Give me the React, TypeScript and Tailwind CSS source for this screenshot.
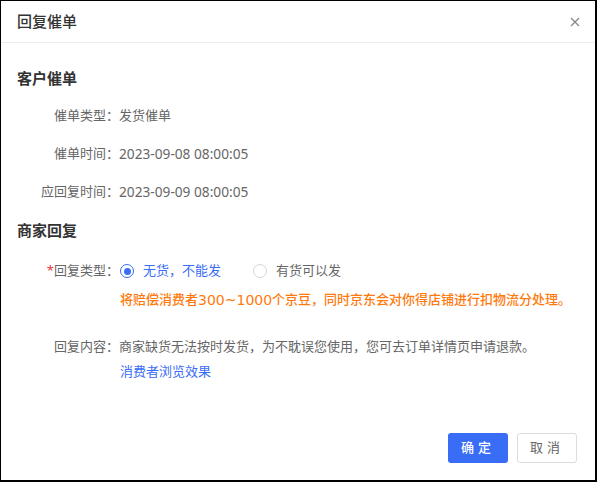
import * as React from "react";

const font = { fontFamily: '"Noto Sans", "Noto Sans CJK SC", sans-serif' };

function InfoRow({ label, value }: { label: string; value: React.ReactNode }) {
  return (
    <div className="flex h-[38px] items-center text-[13px] text-[#666]">
      <span className="w-[102px] text-right">{label}：</span>
      <span>{value}</span>
    </div>
  );
}

function Radio({ checked, label }: { checked?: boolean; label: string }) {
  return (
    <label className="flex items-center gap-[9px]">
      <span
        className={
          checked
            ? "flex h-[14px] w-[14px] items-center justify-center rounded-full border-[1.5px] border-[#3b6ef6]"
            : "h-[14px] w-[14px] rounded-full border border-[#d6d6d6]"
        }
      >
        {checked && <span className="h-[7px] w-[7px] rounded-full bg-[#3b6ef6]" />}
      </span>
      <span className={checked ? "text-[#3b6ef6]" : "text-[#666]"}>{label}</span>
    </label>
  );
}

export default function App() {
  return (
    <div
      style={font}
      className="flex h-[482px] w-[597px] flex-col border-t border-l border-r-2 border-b-2 border-black bg-white"
    >
      {/* Header */}
      <div className="flex h-[42px] shrink-0 items-center justify-between border-b border-[#ececec] pr-[15px] pl-[16px]">
        <span className="text-[15px] font-medium text-[#333]">回复催单</span>
        <svg width="10" height="10" viewBox="0 0 10 10" className="text-[#888]">
          <path d="M1 1L9 9M9 1L1 9" stroke="currentColor" strokeWidth="1.3" />
        </svg>
      </div>

      {/* Body */}
      <div className="flex flex-1 flex-col px-[16px]">
        <div className="mt-[25px] flex h-[20px] items-center text-[15px] font-bold text-[#333]">
          客户催单
        </div>
        <div className="mt-[9px]">
          <InfoRow label="催单类型" value="发货催单" />
          <InfoRow
            label="催单时间"
            value={<span className="text-[13.7px]">2023-09-08 08:00:05</span>}
          />
          <InfoRow
            label="应回复时间"
            value={<span className="text-[13.7px]">2023-09-09 08:00:05</span>}
          />
        </div>

        <div className="mt-[9px] flex h-[20px] items-center text-[15px] font-bold text-[#333]">
          商家回复
        </div>

        <div className="mt-[21px] flex h-[20px] items-center text-[13px] text-[#666]">
          <span className="w-[102px] text-right">
            <span className="text-[#e4393c]">*</span>回复类型：
          </span>
          <div className="ml-[1px] flex items-center gap-[32px]">
            <Radio checked label="无货，不能发" />
            <Radio label="有货可以发" />
          </div>
        </div>
        <div className="mt-[9px] flex h-[20px] items-center pl-[103px] text-[13px] font-medium text-[#ff7a0e]">
          将赔偿消费者
          <span className="font-['DejaVu_Sans'] text-[14px] font-normal">300~1000</span>
          个京豆，同时京东会对你得店铺进行扣物流分处理。
        </div>

        <div className="mt-[27px] flex h-[20px] items-center text-[13px] text-[#666]">
          <span className="w-[102px] text-right">回复内容：</span>
          <span>商家缺货无法按时发货，为不耽误您使用，您可去订单详情页申请退款。</span>
        </div>
        <div className="mt-[5px] flex h-[20px] items-center pl-[103px] text-[13px] text-[#3b6ef6]">
          消费者浏览效果
        </div>

        {/* Footer */}
        <div className="mt-auto flex justify-end gap-[9px] pr-[2px] pb-[17px]">
          <button className="h-[30px] w-[60px] rounded-[3px] bg-[#3a6df6] text-[13px] font-medium tracking-[4px] text-white">
            确定
          </button>
          <button className="h-[30px] w-[60px] rounded-[3px] border border-[#dcdcdc] bg-white text-[13px] tracking-[4px] text-[#666]">
            取消
          </button>
        </div>
      </div>
    </div>
  );
}
